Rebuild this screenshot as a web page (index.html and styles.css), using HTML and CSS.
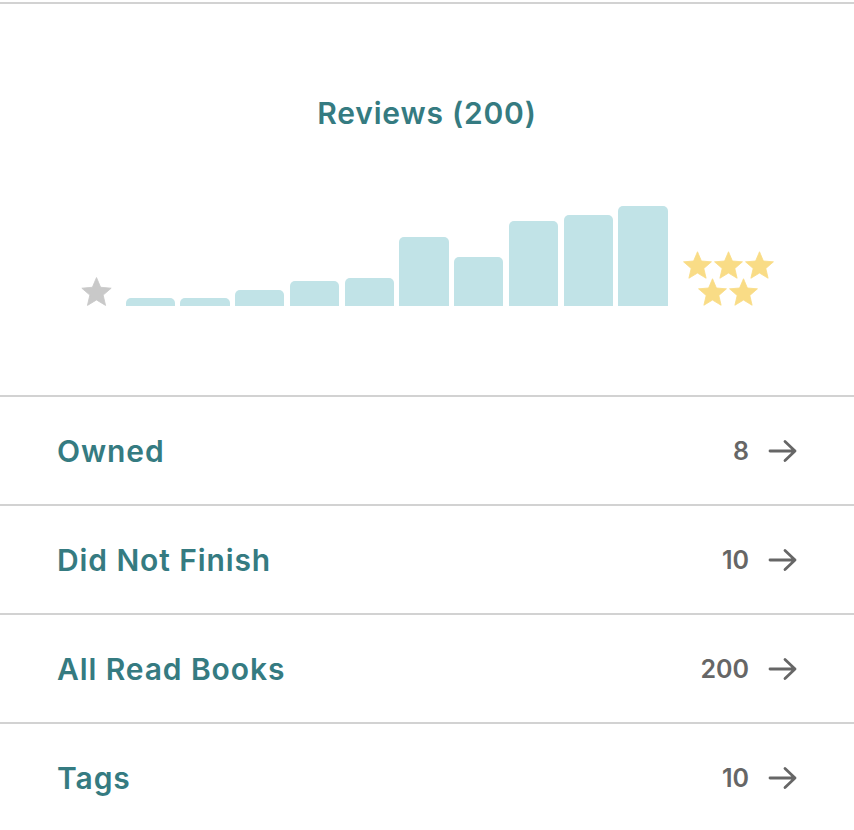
FILE: index.html
```html
<!DOCTYPE html>
<html>
<head>
<meta charset="utf-8">
<link rel="stylesheet" href="styles.css">
</head>
<body>
<div class="page">
  <section class="reviews">
    <h2 class="reviews-title">Reviews (200)</h2>
    <div class="chart">
      <svg class="star star-gray" viewBox="1.6 1.6 20.8 19.8"><path d="M12 17.27L18.18 21l-1.64-7.03L22 9.24l-7.19-.61L12 2 9.19 8.63 2 9.24l5.46 4.73L5.82 21z"/></svg>
      <div class="bars">
        <div class="bar" style="height:8px"></div>
        <div class="bar" style="height:8px"></div>
        <div class="bar" style="height:16px"></div>
        <div class="bar" style="height:25px"></div>
        <div class="bar" style="height:28px"></div>
        <div class="bar" style="height:69px"></div>
        <div class="bar" style="height:49px"></div>
        <div class="bar" style="height:85px"></div>
        <div class="bar" style="height:91px"></div>
        <div class="bar" style="height:100px"></div>
      </div>
      <div class="gold-stars">
        <div class="star-row">
          <svg class="star star-gold" viewBox="1.6 1.6 20.8 19.8"><path d="M12 17.27L18.18 21l-1.64-7.03L22 9.24l-7.19-.61L12 2 9.19 8.63 2 9.24l5.46 4.73L5.82 21z"/></svg>
          <svg class="star star-gold" viewBox="1.6 1.6 20.8 19.8"><path d="M12 17.27L18.18 21l-1.64-7.03L22 9.24l-7.19-.61L12 2 9.19 8.63 2 9.24l5.46 4.73L5.82 21z"/></svg>
          <svg class="star star-gold" viewBox="1.6 1.6 20.8 19.8"><path d="M12 17.27L18.18 21l-1.64-7.03L22 9.24l-7.19-.61L12 2 9.19 8.63 2 9.24l5.46 4.73L5.82 21z"/></svg>
        </div>
        <div class="star-row star-row-2">
          <svg class="star star-gold" viewBox="1.6 1.6 20.8 19.8"><path d="M12 17.27L18.18 21l-1.64-7.03L22 9.24l-7.19-.61L12 2 9.19 8.63 2 9.24l5.46 4.73L5.82 21z"/></svg>
          <svg class="star star-gold" viewBox="1.6 1.6 20.8 19.8"><path d="M12 17.27L18.18 21l-1.64-7.03L22 9.24l-7.19-.61L12 2 9.19 8.63 2 9.24l5.46 4.73L5.82 21z"/></svg>
        </div>
      </div>
    </div>
  </section>
  <a class="row" href="#"><span class="label">Owned</span><span class="meta"><span class="count">8</span><svg class="arrow" viewBox="0 0 30 24"><path d="M2 12H27M17 2.5L27 12L17 21.5"/></svg></span></a>
  <a class="row" href="#"><span class="label">Did Not Finish</span><span class="meta"><span class="count">10</span><svg class="arrow" viewBox="0 0 30 24"><path d="M2 12H27M17 2.5L27 12L17 21.5"/></svg></span></a>
  <a class="row" href="#"><span class="label">All Read Books</span><span class="meta"><span class="count">200</span><svg class="arrow" viewBox="0 0 30 24"><path d="M2 12H27M17 2.5L27 12L17 21.5"/></svg></span></a>
  <a class="row" href="#"><span class="label">Tags</span><span class="meta"><span class="count">10</span><svg class="arrow" viewBox="0 0 30 24"><path d="M2 12H27M17 2.5L27 12L17 21.5"/></svg></span></a>
</div>
</body>
</html>
```
FILE: styles.css
```css
* { box-sizing: border-box; }
html, body { margin: 0; padding: 0; background: #fff; }
body { font-family: Inter, "Noto Sans", sans-serif; }
.page { padding-top: 2px; }
.reviews {
  border-top: 2px solid #d2d2d2;
  height: 393px;
  padding-top: 89px;
  display: flex;
  flex-direction: column;
  align-items: center;
}
.reviews-title {
  margin: 0;
  font-size: 30px;
  line-height: 40px;
  font-weight: 600;
  letter-spacing: 0.8px;
  color: #357b81;
}
.chart {
  margin-top: 73px;
  height: 101px;
  display: flex;
  align-items: flex-end;
  padding-bottom: 1px;
}
.star { display: block; width: 29px; height: 28px; }
.star-gray { width: 31px; height: 29px; fill: #c9c9c9; stroke: #c9c9c9; stroke-width: 0.6; stroke-linejoin: round; margin-right: 14px; }
.star-gold { fill: #f9dc86; stroke: #f9dc86; stroke-width: 0.6; stroke-linejoin: round; }
.bars {
  width: 542px;
  height: 100px;
  display: flex;
  align-items: flex-end;
  gap: 5.5px;
}
.bar {
  flex: 1;
  background: #c1e3e7;
  border-radius: 5px 5px 0 0;
}
.gold-stars {
  margin-left: 15px;
  display: flex;
  flex-direction: column;
  align-items: center;
}
.star-row { display: flex; gap: 2px; }
.star-row-2 { margin-top: -1px; }
.row {
  display: flex;
  align-items: center;
  justify-content: space-between;
  height: 109px;
  border-top: 2px solid #d2d2d2;
  padding: 0 56px 0 57px;
  text-decoration: none;
}
.label {
  font-size: 30px;
  font-weight: 600;
  letter-spacing: 0.9px;
  color: #357b81;
}
.meta { display: flex; align-items: center; gap: 19px; }
.count {
  font-size: 25px;
  font-weight: 600;
  color: #666;
}
.arrow {
  width: 30px;
  height: 24px;
  fill: none;
  stroke: #666;
  stroke-width: 2.8;
  stroke-linecap: round;
  stroke-linejoin: round;
}
```
